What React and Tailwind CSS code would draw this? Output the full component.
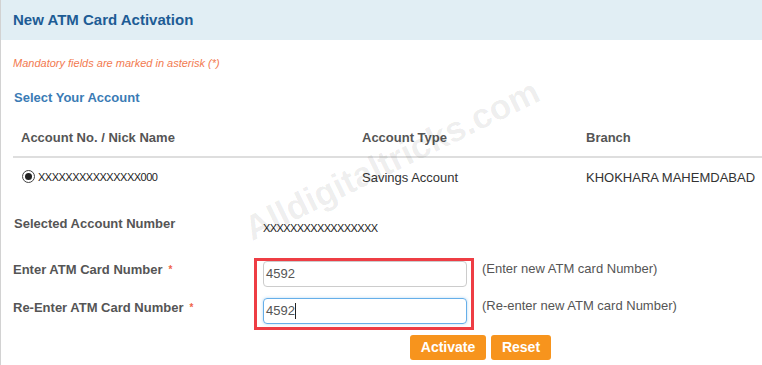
import React from "react";

export default function App() {
  return (
    <div
      className="relative w-[762px] h-[365px] overflow-hidden bg-white border-l border-[#d2d2d2]"
      style={{ fontFamily: '"Liberation Sans", Arial, sans-serif' }}
    >
      <div className="h-[40px] bg-[#e1eef4] flex items-center pl-[12px]">
        <h1 className="text-[15px] font-bold text-[#1d5c95]">New ATM Card Activation</h1>
      </div>

      <div
        className="pointer-events-none absolute left-[391px] top-[160px] -translate-x-1/2 -translate-y-1/2 -rotate-[26deg] whitespace-nowrap text-[35px] font-bold text-[#000]/[0.075]"
      >
        Alldigitaltricks.com
      </div>

      <div className="pl-[12px]">
        <p className="mt-[16px] text-[11px] leading-[14px] italic text-[#f27a50]">
          Mandatory fields are marked in asterisk (*)
        </p>
        <p className="mt-[20px] pl-[1px] text-[13px] leading-[16px] font-bold text-[#3a7bb5]">
          Select Your Account
        </p>

        <div className="mt-[24px] grid grid-cols-[349px_224px_1fr] pb-[10px] border-b-2 border-[#dedede] text-[13px] leading-[16px] font-bold text-[#555]">
          <div className="pl-[8px]">Account No. / Nick Name</div>
          <div>Account Type</div>
          <div>Branch</div>
        </div>

        <div className="mt-[12px] grid grid-cols-[349px_224px_1fr] text-[13px] leading-[16px] text-[#333]">
          <div className="pl-[9px] flex items-center">
            <span className="w-[13px] h-[13px] rounded-full border border-[#444] flex items-center justify-center -mt-[3px]">
              <span className="w-[7px] h-[7px] rounded-full bg-[#222]" />
            </span>
            <span className="ml-[3px] -mt-[3px] text-[11px] tracking-[-0.5px] text-[#222]">XXXXXXXXXXXXXXX000</span>
          </div>
          <div>Savings Account</div>
          <div className="whitespace-nowrap">KHOKHARA MAHEMDABAD</div>
        </div>

        <div className="mt-[30px] flex text-[13px] leading-[16px]">
          <div className="w-[250px] pl-[1px] font-bold text-[#555]">Selected Account Number</div>
          <div className="mt-[4px] text-[11px] tracking-[-0.6px] text-[#222]">XXXXXXXXXXXXXXXXX</div>
        </div>

        <div className="mt-[22px] flex">
          <div className="w-[241px] flex flex-col text-[13px] leading-[16px] font-bold text-[#555]">
            <div className="mt-[4px]">
              Enter ATM Card Number<span className="ml-[6px] align-top text-[10px] text-[#f0664a]">*</span>
            </div>
            <div className="mt-[22px]">
              Re-Enter ATM Card Number<span className="ml-[6px] align-top text-[10px] text-[#f0664a]">*</span>
            </div>
          </div>

          <div className="border-[3px] border-[#ee3d44] pl-[6px] pr-[4px] pb-[3px] flex flex-col gap-[11px]">
            <div className="w-[204px] h-[26px] border border-[#cccccc] rounded-[4px] flex items-center pl-[2px] text-[13px] text-[#555]">
              4592
            </div>
            <div className="w-[204px] h-[26px] border border-[#66afe9] rounded-[4px] flex items-center pl-[2px] text-[13px] text-[#555] shadow-[0_0_3px_rgba(102,175,233,0.5)]">
              4592<span className="inline-block w-px h-[16px] bg-[#222]" />
            </div>
          </div>

          <div className="ml-[8px] flex flex-col text-[13px] leading-[16px] text-[#555]">
            <div className="mt-[3px]">(Enter new ATM card Number)</div>
            <div className="mt-[21px]">(Re-enter new ATM card Number)</div>
          </div>
        </div>

        <div className="mt-[5px] ml-[397px] flex gap-[5px]">
          <button className="w-[76px] h-[25px] rounded-[3px] bg-[#f7941d] text-white text-[14px] font-bold">Activate</button>
          <button className="w-[60px] h-[25px] rounded-[3px] bg-[#f7941d] text-white text-[14px] font-bold">Reset</button>
        </div>
      </div>
    </div>
  );
}
